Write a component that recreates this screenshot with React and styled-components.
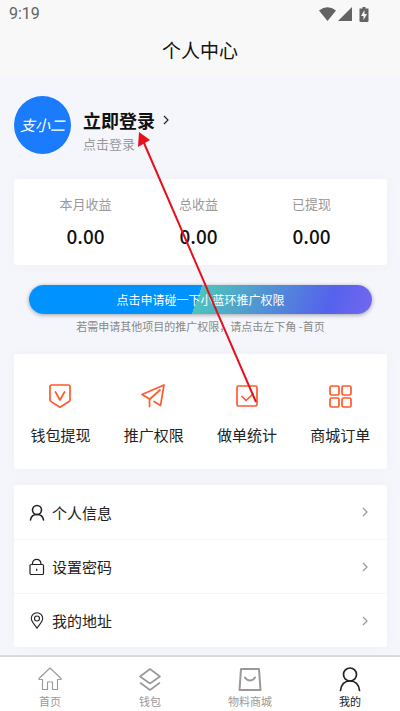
import React from "react";
import styled, { createGlobalStyle } from "styled-components";

const GlobalStyle = createGlobalStyle`
  * { box-sizing: border-box; }
  body {
    margin: 0;
    background: #f5f6fb;
    color: #222;
    font-family: "Noto Sans CJK SC", sans-serif;
  }
  button { font: inherit; color: inherit; border: 0; padding: 0; background: none; cursor: pointer; }
  svg { display: block; flex: none; }
`;

const Page = styled.div`
  position: relative;
  min-height: 100vh;
  display: flex;
  flex-direction: column;
`;

const TopBar = styled.header`
  background: #f8f8f8;
  padding-bottom: 12px;
`;

const StatusBar = styled.div`
  display: flex;
  align-items: center;
  justify-content: space-between;
  height: 28px;
  padding: 0 31px 0 9px;
  color: #636363;
  font: 400 16px/28px Roboto, sans-serif;
`;

const StatusIcons = styled.div`
  display: flex;
  align-items: center;
  gap: 2px;
`;

const Title = styled.h1`
  margin: 8px 0 0;
  text-align: center;
  font-size: 19px;
  line-height: 28px;
  font-weight: 400;
  color: #111;
`;

const Content = styled.main`
  flex: 1;
  display: flex;
  flex-direction: column;
  padding: 20px 13px 8px 14px;
`;

const Profile = styled.section`
  display: flex;
  align-items: center;
  gap: 12px;
`;

const Avatar = styled.div`
  width: 57px;
  height: 58px;
  border-radius: 50%;
  background: #1a7bfd;
  color: #fff;
  text-align: center;
  font-size: 15px;
  font-style: italic;
  font-weight: 400;
  line-height: 58px;
`;

const LoginButton = styled.button`
  display: flex;
  align-items: center;
  gap: 7px;
  font-size: 18px;
  line-height: 26px;
  font-weight: 700;
  color: #111;
`;

const LoginHint = styled.p`
  margin: 1px 0 0;
  font-size: 13px;
  line-height: 20px;
  color: #999;
`;

const LoginText = styled.div`
  padding-top: 11px;
`;

const Card = styled.section`
  background: #fff;
  border-radius: 3px;
  box-shadow: 0 0 12px rgba(80, 90, 110, 0.04);
`;

const Stats = styled(Card)`
  display: grid;
  grid-template-columns: repeat(3, 1fr);
  margin-top: 25px;
  padding: 15px 19px 14px 15px;
  text-align: center;
`;

const StatLabel = styled.div`
  font-size: 13px;
  line-height: 20px;
  color: #999;
`;

const StatValue = styled.div`
  margin-top: 7px;
  font-size: 19px;
  line-height: 30px;
  font-weight: 500;
  color: #111;
`;

const ApplyButton = styled.button`
  height: 29px;
  margin: 20px 15px 0;
  border-radius: 15px;
  background: linear-gradient(110deg, #0092ff 49%, #4dc4bd 49%, #5562ec 87%, #7468ef 100%);
  box-shadow: 0 1px 4px rgba(0, 0, 0, 0.35);
  color: #fff;
  font-size: 12px;
  line-height: 29px;
`;

const Note = styled.p`
  margin: 3px 0 0;
  text-align: center;
  font-size: 11px;
  line-height: 18px;
  color: #888;
`;

const Shortcuts = styled(Card)`
  display: grid;
  grid-template-columns: repeat(4, 1fr);
  margin-top: 19px;
  padding: 28px 0 22px;
`;

const Shortcut = styled.button`
  display: flex;
  flex-direction: column;
  align-items: center;
  gap: 14px;
  font-size: 15px;
  line-height: 24px;
  svg { color: #ff5a2b; }
`;

const Menu = styled(Card)`
  margin-top: 16px;
`;

const MenuItem = styled.button`
  display: flex;
  align-items: center;
  width: 100%;
  height: 54px;
  padding: 0 18px 0 15px;
  gap: 6px;
  font-size: 15px;
  color: #222;
  text-align: left;
  & + & { border-top: 1px solid #f5f5f6; }
`;

const MenuLabel = styled.span`
  flex: 1;
`;

const TabBar = styled.nav`
  display: grid;
  grid-template-columns: repeat(4, 1fr);
  border-top: 2px solid #d9dade;
  background: #fff;
  padding: 9px 0 2px;
`;

const Tab = styled.button`
  display: flex;
  flex-direction: column;
  align-items: center;
  gap: 1px;
  font-size: 11px;
  line-height: 16px;
  color: ${(p) => (p.$active ? "#222" : "#999")};
`;

const Pointer = styled.svg`
  position: absolute;
  left: 130px;
  top: 130px;
  pointer-events: none;
`;

const Icon = ({ size = 26, width = 2, children }) => (
  <svg width={size} height={size} viewBox={`0 0 ${size} ${size}`} fill="none" stroke="currentColor"
    strokeWidth={width} strokeLinecap="round" strokeLinejoin="round" aria-hidden="true">
    {children}
  </svg>
);

const Chevron = ({ color }) => (
  <svg width="8" height="10" viewBox="0 0 8 10" fill="none" stroke={color} strokeWidth="1.2" aria-hidden="true">
    <path d="M2 1l4 4-4 4" />
  </svg>
);

const shortcuts = [
  { label: "钱包提现", icon: <><path d="M4.5 3h17a1.5 1.5 0 0 1 1.5 1.5V18q0 1-1 1.600L13 25.200 4 19.600q-1-.6-1-1.600V4.500A1.500 1.500 0 0 1 4.500 3z" /><path d="M8.500 10l4.500 8 4.500-8" /></> },
  { label: "推广权限", icon: <><path d="M9.500 24.500V17L2 12.500 24 3l-3.500 20.500-6.500-4" /><path d="M10 17L20 8" /></> },
  { label: "做单统计", icon: <><rect x="3" y="4" width="20" height="20" rx="1.500" /><path d="M8 14.500l4 4 7-6.500" /></> },
  { label: "商城订单", icon: <><rect x="3" y="4" width="9" height="9" rx="1.500" /><rect x="15" y="4" width="9" height="9" rx="1.500" /><rect x="3" y="16" width="9" height="9" rx="1.500" /><rect x="15" y="16" width="9" height="9" rx="1.500" /></> },
];

const menu = [
  { label: "个人信息", width: 1.6, icon: <><circle cx="8" cy="6" r="4.500" /><path d="M1.500 16C2 12.500 4.500 10.500 8 10.500s6 2 6.500 5.500" /></> },
  { label: "设置密码", width: 1.2, icon: <><rect x="1" y="6.500" width="13.500" height="10" rx="1.200" /><path d="M3.500 6.500V5.500a4.200 4.200 0 0 1 8.400 0v1M7.700 11v1.500" /></> },
  { label: "我的地址", width: 1.1, icon: <><path d="M8 16.300C5.500 12.500 2.300 9.500 2.300 6.500a5.700 5.700 0 0 1 11.400 0C13.700 9.500 10.500 12.500 8 16.300z" /><circle cx="8" cy="6.500" r="2.500" /></> },
];

const tabs = [
  { label: "首页", width: 1.1, icon: <path d="M13 2L2 12.500q-.5 1 .5 1h3v10h5v-7.500h5v7.500h5v-10h3q1 0 .5-1z" /> },
  { label: "钱包", width: 1.6, icon: <><path d="M13 3l10 7.500L13 17.500 3 10.500z" /><path d="M3.500 17l9.500 7 9.500-7" /></> },
  { label: "物料商城", width: 2, icon: <><path d="M4 3h18l1.500 21h-21z" /><path d="M8 11.500c2.500 4 7.500 4 10 0" /></> },
  { label: "我的", width: 1.7, active: true, icon: <><circle cx="13" cy="8.500" r="6.500" /><path d="M3.500 24.500C4.200 18.500 7.500 15 13 15s8.800 3.500 9.500 9.500" /></> },
];

export default function App() {
  return (
    <Page>
      <GlobalStyle />
      <TopBar>
        <StatusBar>
          <span>9:19</span>
          <StatusIcons aria-hidden="true">
            <svg width="17" height="14" viewBox="0 0 17 14" fill="currentColor"><path d="M0 3.500Q8.500-3 17 3.500L8.500 14z" /></svg>
            <svg width="14" height="14" viewBox="0 0 14 14" fill="currentColor"><path d="M14 0v14H0z" /></svg>
            <svg width="15" height="16" viewBox="0 0 15 16" fill="currentColor">
              <path d="M8.500 1h3v1.500h3V15q0 1-1 1h-7q-1 0-1-1V2.500h3z" /><path d="M10.500 4L7 10h2.500v4L13 8h-2.500z" fill="#f8f8f8" />
            </svg>
          </StatusIcons>
        </StatusBar>
        <Title>个人中心</Title>
      </TopBar>
      <Content>
        <Profile>
          <Avatar>支小二</Avatar>
          <LoginText>
            <LoginButton type="button">立即登录 <Chevron color="#222" /></LoginButton>
            <LoginHint>点击登录</LoginHint>
          </LoginText>
        </Profile>
        <Stats>
          {["本月收益", "总收益", "已提现"].map((label) => (
            <div key={label}>
              <StatLabel>{label}</StatLabel>
              <StatValue>0.00</StatValue>
            </div>
          ))}
        </Stats>
        <ApplyButton type="button">点击申请碰一下小蓝环推广权限</ApplyButton>
        <Note>若需申请其他项目的推广权限，请点击左下角 -首页</Note>
        <Shortcuts>
          {shortcuts.map((s) => (
            <Shortcut type="button" key={s.label}>
              <Icon size={27} width={1.7}>{s.icon}</Icon>
              {s.label}
            </Shortcut>
          ))}
        </Shortcuts>
        <Menu>
          {menu.map((m) => (
            <MenuItem type="button" key={m.label}>
              <Icon size={17} width={m.width}>{m.icon}</Icon>
              <MenuLabel>{m.label}</MenuLabel>
              <Chevron color="#999" />
            </MenuItem>
          ))}
        </Menu>
      </Content>
      <TabBar>
        {tabs.map((t) => (
          <Tab type="button" key={t.label} $active={t.active} aria-current={t.active ? "page" : undefined}>
            <Icon width={t.width}>{t.icon}</Icon>
            {t.label}
          </Tab>
        ))}
      </TabBar>
      <Pointer width="130" height="280" viewBox="0 0 130 280" aria-hidden="true">
        <path d="M14 13L126 272" stroke="#e60f1b" strokeWidth="2" />
        <path d="M9 2L8 17 20 10z" fill="#e60f1b" />
      </Pointer>
    </Page>
  );
}
